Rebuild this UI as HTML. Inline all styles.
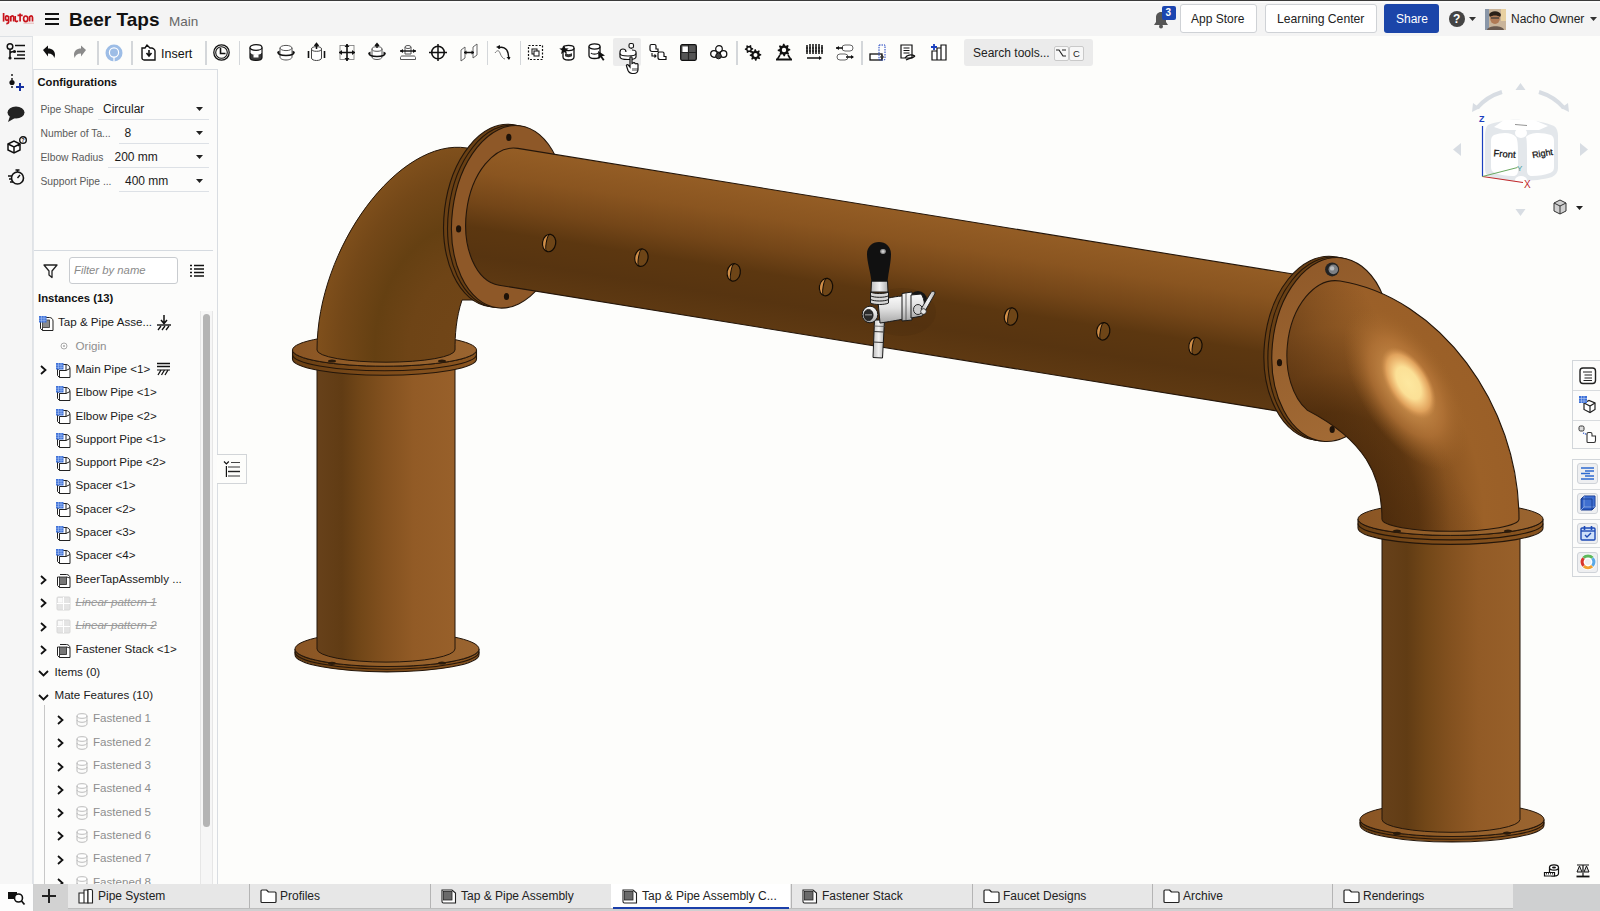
<!DOCTYPE html>
<html><head><meta charset="utf-8"><style>
*{margin:0;padding:0;box-sizing:border-box}
html,body{width:1600px;height:911px;overflow:hidden;background:#fdfdfb;font-family:"Liberation Sans",sans-serif;color:#1a1a1a}
.a{position:absolute}
.t{position:absolute;white-space:nowrap;line-height:1}
svg{position:absolute;overflow:visible}
</style></head>
<body>
<svg style="left:0;top:0" width="1600" height="911" viewBox="0 0 1600 911">
<defs>
<linearGradient id="gMain" gradientUnits="userSpaceOnUse" x1="900" y1="211" x2="878.5" y2="347">
 <stop offset="0" stop-color="#945d25"/>
 <stop offset="0.2" stop-color="#8a5520"/>
 <stop offset="0.42" stop-color="#744618"/>
 <stop offset="0.6" stop-color="#5c3710"/>
 <stop offset="0.8" stop-color="#573410"/>
 <stop offset="1" stop-color="#5e3912"/>
</linearGradient>
<linearGradient id="gSup" x1="0" y1="0" x2="1" y2="0">
 <stop offset="0" stop-color="#67411a"/>
 <stop offset="0.18" stop-color="#613c14"/>
 <stop offset="0.32" stop-color="#724718"/>
 <stop offset="0.5" stop-color="#83511f"/>
 <stop offset="0.7" stop-color="#925b26"/>
 <stop offset="1" stop-color="#98602a"/>
</linearGradient>
<linearGradient id="gFlTop" x1="0" y1="0" x2="1" y2="0">
 <stop offset="0" stop-color="#8a5524"/>
 <stop offset="0.5" stop-color="#94602a"/>
 <stop offset="1" stop-color="#9a6430"/>
</linearGradient>
<linearGradient id="gFlEdge" x1="0" y1="0" x2="1" y2="0">
 <stop offset="0" stop-color="#6a4014"/>
 <stop offset="0.5" stop-color="#7e4c1a"/>
 <stop offset="1" stop-color="#8a5520"/>
</linearGradient>
<radialGradient id="gElL" gradientUnits="userSpaceOnUse" cx="0" cy="0" r="1" gradientTransform="translate(470 352) scale(154 206)">
 <stop offset="0" stop-color="#724618"/>
 <stop offset="0.4" stop-color="#6e4416"/>
 <stop offset="0.62" stop-color="#654012"/>
 <stop offset="0.85" stop-color="#744818"/>
 <stop offset="1" stop-color="#80501c"/>
</radialGradient>
<radialGradient id="gHi" gradientUnits="userSpaceOnUse" cx="0" cy="0" r="1" gradientTransform="translate(1408.5 383) rotate(58) scale(40 21)">
 <stop offset="0" stop-color="#fde8a0"/>
 <stop offset="0.45" stop-color="#fbe096"/>
 <stop offset="0.6" stop-color="#f2c47c"/>
 <stop offset="0.8" stop-color="#e0a25c"/>
 <stop offset="1" stop-color="#c88848" stop-opacity="0"/>
</radialGradient>
<radialGradient id="gElR" gradientUnits="userSpaceOnUse" cx="0" cy="0" r="1" gradientTransform="translate(1335 522) scale(186 243)">
 <stop offset="0" stop-color="#5a3410"/>
 <stop offset="0.25" stop-color="#5a3410"/>
 <stop offset="0.45" stop-color="#633a12"/>
 <stop offset="0.62" stop-color="#8a5420"/>
 <stop offset="0.8" stop-color="#9c6128"/>
 <stop offset="1" stop-color="#9a5f28"/>
</radialGradient>
<radialGradient id="gHi2" gradientUnits="userSpaceOnUse" cx="0" cy="0" r="1" gradientTransform="translate(1406 388) rotate(58) scale(92 46)">
 <stop offset="0" stop-color="#e0a860"/>
 <stop offset="0.6" stop-color="#b8783a" stop-opacity=".7"/>
 <stop offset="1" stop-color="#9c6228" stop-opacity="0"/>
</radialGradient>
<linearGradient id="gFlR" gradientUnits="userSpaceOnUse" x1="1270" y1="260" x2="1380" y2="440">
 <stop offset="0" stop-color="#8e5828"/>
 <stop offset="1" stop-color="#a46c36"/>
</linearGradient>
<linearGradient id="gShadeR" gradientUnits="userSpaceOnUse" x1="1288" y1="380" x2="1385" y2="330">
 <stop offset="0" stop-color="#3e2208" stop-opacity=".55"/>
 <stop offset="0.5" stop-color="#3e2208" stop-opacity=".25"/>
 <stop offset="1" stop-color="#3e2208" stop-opacity="0"/>
</linearGradient>
</defs>
<path d="M295,649 A92,17.5 0 0 0 479,649 L479,654.4 A92,17.5 0 0 1 295,654.4 Z" fill="url(#gFlEdge)" stroke="#24160a" stroke-width="1.1"/>
<path d="M295,651.7 A92,17.5 0 0 0 479,651.7" fill="none" stroke="#24160a" stroke-width="1.1"/>
<ellipse cx="387" cy="649" rx="92" ry="17.5" fill="url(#gFlTop)" stroke="#24160a" stroke-width="1"/>
<path d="M317,360 L317,649 A69,13.1 0 0 0 455,649 L455,360 Z" fill="url(#gSup)"/>
<path d="M317,360 L317,649 M455,360 L455,649" stroke="#24160a" stroke-width="1"/>
<path d="M317,649 A69,13.1 0 0 0 455,649" fill="none" stroke="#24160a" stroke-width="1"/>
<ellipse cx="332" cy="663.35" rx="4" ry="1.6" fill="#2a1a0a"/>
<ellipse cx="442" cy="663.0" rx="4" ry="1.6" fill="#2a1a0a"/>
<path d="M292.5,350 A92,16.2 0 0 0 476.5,350 L476.5,359.0 A92,16.2 0 0 1 292.5,359.0 Z" fill="url(#gFlEdge)" stroke="#24160a" stroke-width="1.1"/>
<path d="M292.5,354.5 A92,16.2 0 0 0 476.5,354.5" fill="none" stroke="#24160a" stroke-width="1.1"/>
<ellipse cx="384.5" cy="350" rx="92" ry="16.2" fill="url(#gFlTop)" stroke="#24160a" stroke-width="1"/>
<ellipse cx="332" cy="361" rx="4" ry="1.6" fill="#2a1a0a"/>
<ellipse cx="442" cy="361" rx="4" ry="1.6" fill="#2a1a0a"/>
<path d="M317,350 C317,247.7 399,137.1 467,148 L505,165 L505,300 L462,300 C456,318 455,335 455,350 A69,12.2 0 0 1 317,350 Z" fill="url(#gElL)" stroke="#24160a" stroke-width="1"/>
<ellipse cx="500.6" cy="215.5" rx="56.3" ry="91.7" transform="rotate(7 500.6 215.5)" fill="#6a4014" stroke="#24160a" stroke-width="1.1"/>
<ellipse cx="504.6" cy="216.2" rx="56.3" ry="91.7" transform="rotate(7 504.6 216.2)" fill="#6a4014" stroke="#24160a" stroke-width="1.1"/>
<ellipse cx="508.5" cy="216.8" rx="56.3" ry="91.7" transform="rotate(7 508.5 216.8)" fill="url(#gFlR)" stroke="#24160a" stroke-width="1.1"/>
<path d="M517.9,148.4 L1310,276.8 L1310,416.3 L499.1,285.2 A42.4,69 7 0 1 466.5,211.6 A42.4,69 7 0 1 517.9,148.4 Z" fill="url(#gMain)"/>
<path d="M1310,276.8 L517.9,148.4 M1310,416.3 L499.1,285.2 A42.4,69 7 0 1 466.5,211.6 A42.4,69 7 0 1 517.9,148.4" fill="none" stroke="#24160a" stroke-width="1.1"/>
<ellipse cx="508.8" cy="137.4" rx="2.6" ry="3.6" fill="#1e1208"/>
<ellipse cx="458.6" cy="228.9" rx="2.6" ry="3.6" fill="#1e1208"/>
<ellipse cx="506.5" cy="296.5" rx="2.6" ry="3.6" fill="#1e1208"/>
<g transform="rotate(10 549.1 243.0)"><ellipse cx="549.1" cy="243.0" rx="6.6" ry="8.8" fill="#6e4517"/><path d="M548.6,234.4 A6.4,8.6 0 0 0 548.6,251.6 A2.4,8.6 0 0 1 548.6,234.4z" fill="#d08e48"/><ellipse cx="549.1" cy="243.0" rx="6.6" ry="8.8" fill="none" stroke="#140c04" stroke-width="1.2"/><path d="M548.6,234.4 A2.4,8.6 0 0 0 548.6,251.6" fill="none" stroke="#140c04" stroke-width="1"/></g>
<g transform="rotate(10 641.4 257.7)"><ellipse cx="641.4" cy="257.7" rx="6.6" ry="8.8" fill="#6e4517"/><path d="M640.9,249.1 A6.4,8.6 0 0 0 640.9,266.3 A2.4,8.6 0 0 1 640.9,249.1z" fill="#d08e48"/><ellipse cx="641.4" cy="257.7" rx="6.6" ry="8.8" fill="none" stroke="#140c04" stroke-width="1.2"/><path d="M640.9,249.1 A2.4,8.6 0 0 0 640.9,266.3" fill="none" stroke="#140c04" stroke-width="1"/></g>
<g transform="rotate(10 733.7 272.4)"><ellipse cx="733.7" cy="272.4" rx="6.6" ry="8.8" fill="#6e4517"/><path d="M733.2,263.79999999999995 A6.4,8.6 0 0 0 733.2,281.0 A2.4,8.6 0 0 1 733.2,263.79999999999995z" fill="#d08e48"/><ellipse cx="733.7" cy="272.4" rx="6.6" ry="8.8" fill="none" stroke="#140c04" stroke-width="1.2"/><path d="M733.2,263.79999999999995 A2.4,8.6 0 0 0 733.2,281.0" fill="none" stroke="#140c04" stroke-width="1"/></g>
<g transform="rotate(10 826.0 287.1)"><ellipse cx="826.0" cy="287.1" rx="6.6" ry="8.8" fill="#6e4517"/><path d="M825.5,278.5 A6.4,8.6 0 0 0 825.5,295.70000000000005 A2.4,8.6 0 0 1 825.5,278.5z" fill="#d08e48"/><ellipse cx="826.0" cy="287.1" rx="6.6" ry="8.8" fill="none" stroke="#140c04" stroke-width="1.2"/><path d="M825.5,278.5 A2.4,8.6 0 0 0 825.5,295.70000000000005" fill="none" stroke="#140c04" stroke-width="1"/></g>
<g transform="rotate(10 1011.0 316.5)"><ellipse cx="1011.0" cy="316.5" rx="6.6" ry="8.8" fill="#6e4517"/><path d="M1010.5,307.9 A6.4,8.6 0 0 0 1010.5,325.1 A2.4,8.6 0 0 1 1010.5,307.9z" fill="#d08e48"/><ellipse cx="1011.0" cy="316.5" rx="6.6" ry="8.8" fill="none" stroke="#140c04" stroke-width="1.2"/><path d="M1010.5,307.9 A2.4,8.6 0 0 0 1010.5,325.1" fill="none" stroke="#140c04" stroke-width="1"/></g>
<g transform="rotate(10 1103.2 331.3)"><ellipse cx="1103.2" cy="331.3" rx="6.6" ry="8.8" fill="#6e4517"/><path d="M1102.7,322.7 A6.4,8.6 0 0 0 1102.7,339.90000000000003 A2.4,8.6 0 0 1 1102.7,322.7z" fill="#d08e48"/><ellipse cx="1103.2" cy="331.3" rx="6.6" ry="8.8" fill="none" stroke="#140c04" stroke-width="1.2"/><path d="M1102.7,322.7 A2.4,8.6 0 0 0 1102.7,339.90000000000003" fill="none" stroke="#140c04" stroke-width="1"/></g>
<g transform="rotate(10 1195.4 346.1)"><ellipse cx="1195.4" cy="346.1" rx="6.6" ry="8.8" fill="#6e4517"/><path d="M1194.9,337.5 A6.4,8.6 0 0 0 1194.9,354.70000000000005 A2.4,8.6 0 0 1 1194.9,337.5z" fill="#d08e48"/><ellipse cx="1195.4" cy="346.1" rx="6.6" ry="8.8" fill="none" stroke="#140c04" stroke-width="1.2"/><path d="M1194.9,337.5 A2.4,8.6 0 0 0 1194.9,354.70000000000005" fill="none" stroke="#140c04" stroke-width="1"/></g>
<ellipse cx="1323.8" cy="348.2" rx="59.5" ry="92.2" transform="rotate(5.5 1323.8 348.2)" fill="#6a4014" stroke="#24160a" stroke-width="1.1"/>
<ellipse cx="1327.8" cy="348.9" rx="59.5" ry="92.2" transform="rotate(5.5 1327.8 348.9)" fill="#6a4014" stroke="#24160a" stroke-width="1.1"/>
<ellipse cx="1331.7" cy="349.5" rx="59.5" ry="92.2" transform="rotate(5.5 1331.7 349.5)" fill="url(#gFlR)" stroke="#24160a" stroke-width="1.1"/>
<path d="M1360,819.5 A92,17 0 0 0 1544,819.5 L1544,824.9 A92,17 0 0 1 1360,824.9 Z" fill="url(#gFlEdge)" stroke="#24160a" stroke-width="1.1"/>
<path d="M1360,822.2 A92,17 0 0 0 1544,822.2" fill="none" stroke="#24160a" stroke-width="1.1"/>
<ellipse cx="1452" cy="819.5" rx="92" ry="17" fill="url(#gFlTop)" stroke="#24160a" stroke-width="1"/>
<path d="M1382,530 L1382,819.5 A69,12.8 0 0 0 1520,819.5 L1520,530 Z" fill="url(#gSup)"/>
<path d="M1382,530 L1382,819.5 M1520,530 L1520,819.5" stroke="#24160a" stroke-width="1"/>
<path d="M1382,819.5 A69,12.8 0 0 0 1520,819.5" fill="none" stroke="#24160a" stroke-width="1"/>
<ellipse cx="1397" cy="833.44" rx="4" ry="1.6" fill="#2a1a0a"/>
<ellipse cx="1507" cy="833.1" rx="4" ry="1.6" fill="#2a1a0a"/>
<path d="M1358.0,519 A92.5,16.4 0 0 0 1543.0,519 L1543.0,528.0 A92.5,16.4 0 0 1 1358.0,528.0 Z" fill="url(#gFlEdge)" stroke="#24160a" stroke-width="1.1"/>
<path d="M1358.0,523.5 A92.5,16.4 0 0 0 1543.0,523.5" fill="none" stroke="#24160a" stroke-width="1.1"/>
<ellipse cx="1450.5" cy="519" rx="92.5" ry="16.4" fill="url(#gFlTop)" stroke="#24160a" stroke-width="1"/>
<ellipse cx="1397" cy="531" rx="4" ry="1.6" fill="#2a1a0a"/>
<ellipse cx="1508" cy="531" rx="4" ry="1.6" fill="#2a1a0a"/>
<path d="M1340.1,281.0 C1438.8,296.8 1519,404 1519,519 A68.5,12.3 0 0 1 1382,519 C1382,475 1365,440 1307.0,409.9 A44.5,69 5.5 0 1 1287.4,345.2 A44.5,69 5.5 0 1 1340.1,281.0 Z" fill="url(#gElR)" stroke="#24160a" stroke-width="1.1"/>
<path d="M1340.1,281.0 C1438.8,296.8 1519,404 1519,519 A68.5,12.3 0 0 1 1382,519 C1382,475 1365,440 1307.0,409.9 A44.5,69 5.5 0 1 1287.4,345.2 A44.5,69 5.5 0 1 1340.1,281.0 Z" fill="url(#gShadeR)"/>
<path d="M1340.1,281.0 C1438.8,296.8 1519,404 1519,519 A68.5,12.3 0 0 1 1382,519 C1382,475 1365,440 1307.0,409.9 A44.5,69 5.5 0 1 1287.4,345.2 A44.5,69 5.5 0 1 1340.1,281.0 Z" fill="url(#gHi2)"/>
<path d="M1340.1,281.0 C1438.8,296.8 1519,404 1519,519 A68.5,12.3 0 0 1 1382,519 C1382,475 1365,440 1307.0,409.9 A44.5,69 5.5 0 1 1287.4,345.2 A44.5,69 5.5 0 1 1340.1,281.0 Z" fill="url(#gHi)"/>
<circle cx="1332.1" cy="269.4" r="7" fill="#222"/><circle cx="1333.3" cy="269.4" r="4.8" fill="#7d8084"/><circle cx="1332.1" cy="268.4" r="2.2" fill="#b8bbbe"/>
<ellipse cx="1279.5" cy="362.7" rx="2.6" ry="3.6" fill="#1e1208"/>
<ellipse cx="1332.2" cy="429.5" rx="2.6" ry="3.6" fill="#1e1208"/>
<g>
<defs>
<linearGradient id="gSil" x1="0" y1="0" x2="0" y2="1"><stop offset="0" stop-color="#fafafa"/><stop offset=".45" stop-color="#e2e2e2"/><stop offset="1" stop-color="#a8a8a8"/></linearGradient>
<linearGradient id="gSilH" x1="0" y1="0" x2="1" y2="0"><stop offset="0" stop-color="#bdbdbd"/><stop offset=".5" stop-color="#f2f2f2"/><stop offset="1" stop-color="#b0b0b0"/></linearGradient>
</defs>
<ellipse cx="902" cy="312" rx="34" ry="24" fill="#2e1a08" opacity=".1"/>
<path d="M874.5 320 L873 357.5 L882.5 358 L884.5 320 Z" fill="url(#gSilH)" stroke="#1a1a1a" stroke-width="1"/>
<path d="M873.6 331.5 L883.6 332 M873.2 342 L883 342.5" stroke="#333" stroke-width="1"/>
<path d="M874 326 L884.5 326.5" stroke="#555" stroke-width=".8"/>
<circle cx="918" cy="300" r="9" fill="#151515"/>
<path d="M878 301 C886 298 898 296 904 296 L904 319 C898 320 888 322 880 323 Z" fill="url(#gSil)" stroke="#1a1a1a" stroke-width="1"/>
<path d="M902 293.5 L912 292 L912 320 L902 321 Z" fill="url(#gSil)" stroke="#1a1a1a" stroke-width="1"/>
<path d="M906 293 L906 320.5" stroke="#444" stroke-width=".8"/>
<path d="M911 295 L921 294 C925 298 926 312 922 316 L911 318 Z" fill="url(#gSil)" stroke="#1a1a1a" stroke-width="1"/>
<ellipse cx="918" cy="309.5" rx="4.5" ry="5" fill="#cfcfcf" stroke="#1a1a1a" stroke-width=".9"/>
<path d="M921 309 L931 292.5 C932.5 290 936 291.5 934.8 294 L925 311 Z" fill="url(#gSilH)" stroke="#1a1a1a" stroke-width=".9"/>
<circle cx="923.5" cy="311.5" r="2.8" fill="#e8e8e8" stroke="#1a1a1a" stroke-width=".8"/>
<ellipse cx="870" cy="314.5" rx="7.8" ry="8.3" fill="url(#gSil)" stroke="#1a1a1a" stroke-width="1"/>
<ellipse cx="868.5" cy="315" rx="4.6" ry="5.6" fill="#2a2a2a" stroke="#111" stroke-width=".8"/>
<path d="M865 314.8 L872 314.8" stroke="#8a8a8a" stroke-width="1.3"/>
<path d="M871.5 281 L887.5 281 L888 292 L871 292 Z" fill="url(#gSilH)" stroke="#1a1a1a" stroke-width="1"/>
<path d="M870.5 292 C874 294 885 294 888.5 292 L888.5 303 C885 305 874 305 870.5 303 Z" fill="#d6d6d6" stroke="#1a1a1a" stroke-width="1"/>
<path d="M870.5 295.8 C874 297.8 885 297.8 888.5 295.8 M870.5 299.5 C874 301.5 885 301.5 888.5 299.5" stroke="#1a1a1a" stroke-width="1" fill="none"/>
<path d="M871.5 281.5 C870.5 272 867 262 867 254 C867 246.5 872.5 242 879 242 C885.5 242 891 246.5 891 254 C891 262 888.5 272 887.5 281.5 Z" fill="#111"/>
<ellipse cx="883" cy="251.5" rx="2.8" ry="2.4" fill="#9a9a9a"/>
<ellipse cx="883" cy="251.5" rx="1.4" ry="1.2" fill="#cfcfcf"/>
</g>
</svg>
<div class="a" style="left:0;top:0;width:1600px;height:1px;background:#3a3a3a"></div>
<div class="a" style="left:0;top:1px;width:1600px;height:35px;background:#f4f4f4"></div>
<div class="a" style="left:0;top:1px;width:1600px;height:2px;background:#fbfbfb"></div>
<svg style="left:0;top:0" width="1" height="1"><g fill="none" stroke="#c8121a" stroke-width="1.7" stroke-linecap="butt"><path d="M3.6 13v8.6"/><path d="M8.6 16v6c0 1.2-.8 1.6-2.3 1.6M8.6 17.2c-.3-.9-1-1.3-1.7-1.3-1 0-1.4.9-1.4 2.2s.4 2.3 1.4 2.3c.7 0 1.4-.4 1.7-1.3"/><path d="M10.8 21.6v-5.6M10.8 17.2c.4-.9 1-1.3 1.6-1.3.9 0 1.3.6 1.3 1.7v4"/><path d="M15.2 16v3.8c0 1 .4 1.8 1.3 1.8.6 0 1-.4 1.2-1"/><path d="M17.5 15.3h5.2M20.1 13.6v8"/><path d="M25.7 16c1.3 0 2.1 1 2.1 2.8s-.8 2.8-2.1 2.8-2.1-1-2.1-2.8.8-2.8 2.1-2.8z"/><path d="M29.6 21.6v-5.6M29.6 17.2c.4-.9 1-1.3 1.6-1.3.9 0 1.3.6 1.3 1.7v4"/></g><path d="M23.5 23.2h10.5" stroke="#e08a8a" stroke-width=".6"/></svg>
<div class="a" style="left:45px;top:13px;width:14px;height:2.4px;background:#111"></div>
<div class="a" style="left:45px;top:18px;width:14px;height:2.4px;background:#111"></div>
<div class="a" style="left:45px;top:23px;width:14px;height:2.4px;background:#111"></div>
<div class="t" style="left:69px;top:10px;font-size:19px;font-weight:bold;color:#111">Beer Taps</div>
<div class="t" style="left:169px;top:14.5px;font-size:13.5px;color:#666">Main</div>
<svg style="left:1152px;top:10px" width="18" height="20" viewBox="0 0 18 20"><path d="M9 2c-3 0-5 2.3-5 5.5v4.5l-2 3h14l-2-3V7.5C14 4.3 12 2 9 2z" fill="#555"/><circle cx="9" cy="16.5" r="2" fill="#555"/></svg>
<div class="a" style="left:1162px;top:6px;width:14px;height:14px;background:#1c45b0;border-radius:2px"></div>
<div class="t" style="left:1165.5px;top:7.5px;font-size:10px;font-weight:bold;color:#fff">3</div>
<div class="a" style="left:1180px;top:4px;width:77px;height:29px;background:#fff;border:1px solid #cfd2d6;border-radius:3px"></div>
<div class="t" style="left:1191px;top:13px;font-size:12px;color:#222">App Store</div>
<div class="a" style="left:1265px;top:4px;width:112px;height:29px;background:#fff;border:1px solid #cfd2d6;border-radius:3px"></div>
<div class="t" style="left:1277px;top:13px;font-size:12.2px;color:#222">Learning Center</div>
<div class="a" style="left:1384px;top:4px;width:55px;height:29px;background:#1b45a9;border-radius:3px"></div>
<div class="t" style="left:1396px;top:13px;font-size:12px;color:#fff">Share</div>
<div class="a" style="left:1449px;top:11px;width:16px;height:16px;background:#444;border-radius:50%"></div>
<div class="t" style="left:1453px;top:12.5px;font-size:12px;font-weight:bold;color:#fff">?</div>
<svg style="left:1469px;top:17px" width="7" height="4"><path d="M0 0h7L3.5 4z" fill="#333"/></svg>
<svg style="left:1485px;top:9px" width="21" height="21" viewBox="0 0 21 21"><rect width="21" height="21" fill="#c9b49a"/><rect x="0" y="0" width="4" height="21" fill="#8a97a8"/><rect x="16" y="0" width="5" height="12" fill="#e8d0a0"/><ellipse cx="10" cy="9" rx="5" ry="6" fill="#b07a55"/><path d="M4 6c1-5 11-5 12 0l-1 2c-2-2-8-2-10 0z" fill="#2a2018"/><rect x="6" y="8" width="8" height="2" fill="#333" opacity=".6"/><path d="M2 21c1-5 16-5 17 0z" fill="#6a5a50"/></svg>
<div class="t" style="left:1511px;top:13px;font-size:12px;color:#222">Nacho Owner</div>
<svg style="left:1590px;top:17px" width="7" height="4"><path d="M0 0h7L3.5 4z" fill="#333"/></svg>
<div class="a" style="left:0;top:36px;width:33px;height:875px;background:#f6f6f6;border-right:1px solid #e0e3e6;border-top:1px solid #dde1e5"></div>
<svg style="left:6px;top:43px" width="20" height="17" viewBox="0 0 20 17"><circle cx="4" cy="3.5" r="2.8" fill="none" stroke="#111" stroke-width="1.5"/><path d="M4 6.3v8.5M4 11c0-2 2-2.5 4-2.5" fill="none" stroke="#111" stroke-width="1.5"/><circle cx="4" cy="15" r="1.6" fill="#111"/><circle cx="8.5" cy="8.5" r="1.6" fill="#111"/><path d="M9 2.5h10M11 8.5h8M11 12h8M8 15.5h11" stroke="#111" stroke-width="1.6"/></svg>
<svg style="left:9px;top:74px" width="17" height="18" viewBox="0 0 17 18"><path d="M3 0v16" stroke="#111" stroke-width="1.4" stroke-dasharray="2 2"/><circle cx="3" cy="8.5" r="2.6" fill="#111"/><path d="M7 13h8M11 9v8" stroke="#1530a0" stroke-width="2"/></svg>
<svg style="left:7px;top:106px" width="18" height="17" viewBox="0 0 18 17"><ellipse cx="9" cy="6.5" rx="8.5" ry="6" fill="#222"/><path d="M3 10l-2 6 7-4z" fill="#222"/></svg>
<svg style="left:6px;top:136px" width="21" height="18" viewBox="0 0 21 18"><path d="M2 8l6-3 6 3v6l-6 3-6-3z" fill="#fff" stroke="#111" stroke-width="1.5"/><path d="M2 8l6 3 6-3M8 11v6" fill="none" stroke="#111" stroke-width="1.5"/><circle cx="17" cy="4" r="3.3" fill="#fff" stroke="#111" stroke-width="1.4"/><path d="M14 8l-2 2" stroke="#111" stroke-width="1.4"/><text x="15.3" y="6" font-size="5.5" font-weight="bold" font-family="Liberation Sans" fill="#111">?</text></svg>
<svg style="left:7px;top:168px" width="18" height="17" viewBox="0 0 18 17"><circle cx="10.5" cy="10" r="6" fill="none" stroke="#111" stroke-width="1.6"/><path d="M8.5 2h4M10.5 2v2M10.5 10l2.5-3M1 8h4M2 11h3M3 14h3" stroke="#111" stroke-width="1.4"/></svg>
<div class="a" style="left:0;top:884px;width:33px;height:27px;background:#fdfdfd"></div>
<svg style="left:8px;top:891px" width="17" height="14" viewBox="0 0 17 14"><path d="M0 1h9v7H0z" fill="#111"/><circle cx="10.5" cy="7" r="4" fill="#fff" stroke="#111" stroke-width="1.6"/><path d="M13.5 10l3 3.5" stroke="#111" stroke-width="1.8"/></svg>
<svg style="left:42px;top:45px" width="14" height="13" viewBox="0 0 14 13"><path d="M1 5l5-4.5v3c4.5 0 7 2.5 7 6.5 0 1-0.3 2-0.8 3-0.5-3-2.5-4.5-6.2-4.5v3z" fill="#111"/></svg>
<svg style="left:73px;top:45px" width="14" height="13" viewBox="0 0 14 13"><path d="M13 5L8 .5v3C3.5 3.5 1 6 1 10c0 1 .3 2 .8 3 .5-3 2.5-4.5 6.2-4.5v3z" fill="#8b8b8b"/></svg>
<div class="a" style="left:97px;top:41px;width:1.5px;height:24px;background:#d4d7da"></div>
<svg style="left:105px;top:44px" width="18" height="18" viewBox="0 0 18 18"><circle cx="9" cy="9" r="8.5" fill="#9dbde6"/><circle cx="9" cy="8.5" r="4.6" fill="none" stroke="#fff" stroke-width="1.2"/><path d="M9 13v5" stroke="#fff" stroke-width="1.2"/></svg>
<div class="a" style="left:131px;top:41px;width:1.5px;height:24px;background:#d4d7da"></div>
<svg style="left:141px;top:44px" width="15" height="17" viewBox="0 0 15 17"><path d="M1 4h3l2-3 3 3h1.5c1.5 0 3.5 1.5 3.5 3v9H3c-1 0-2-1-2-2z" fill="#fff" stroke="#111" stroke-width="1.4"/><path d="M8 6v5M5.5 9l2.5 3 2.5-3" stroke="#111" stroke-width="1.6" fill="none"/></svg>
<div class="t" style="left:161px;top:48px;font-size:12.5px;color:#111">Insert</div>
<div class="a" style="left:205px;top:41px;width:1.5px;height:24px;background:#d4d7da"></div>
<svg style="left:213px;top:44px" width="17" height="17" viewBox="0 0 17 17"><circle cx="8.5" cy="8.5" r="7.7" fill="none" stroke="#111" stroke-width="1.3"/><circle cx="8.5" cy="8.5" r="5.8" fill="none" stroke="#111" stroke-width="1.1"/><path d="M7.5 4v5.5h5" fill="none" stroke="#111" stroke-width="1.6"/></svg>
<div class="a" style="left:238.5px;top:41px;width:1.5px;height:24px;background:#d4d7da"></div>
<svg style="left:249px;top:44px" width="14" height="17" viewBox="0 0 14 17"><path d="M1 3.5v10c0 1.7 2.7 3 6 3s6-1.3 6-3v-10" fill="#3a3a3a" stroke="#111" stroke-width="1.2"/><path d="M1.6 3.5v5c0 1.5 2.5 2.5 5.4 2.5s5.4-1 5.4-2.5v-5z" fill="#fff"/><path d="M4.5 10.5v3h5v-3" fill="#fff"/><ellipse cx="7" cy="3.5" rx="6" ry="2.8" fill="#fff" stroke="#111" stroke-width="1.2"/></svg>
<svg style="left:277px;top:44px" width="18" height="17" viewBox="0 0 18 17"><path d="M3 4v9c0 1.7 2.7 3 6 3s6-1.3 6-3V4" fill="#fff" stroke="#555" stroke-width="1"/><ellipse cx="9" cy="4" rx="6" ry="2.6" fill="#fff" stroke="#555" stroke-width="1"/><path d="M1 8c0 2 3 3.5 8 3.5s8-1.5 8-3.5" fill="none" stroke="#111" stroke-width="1.6"/><path d="M0 8l2.5-1.5v3zM18 8l-2.5-1.5v3z" fill="#111"/></svg>
<svg style="left:307px;top:43px" width="19" height="18" viewBox="0 0 19 18"><path d="M4.5 6v9c0 1.5 2.2 2.5 5 2.5s5-1 5-2.5V6" fill="#fff" stroke="#444" stroke-width="1"/><ellipse cx="9.5" cy="6" rx="5" ry="2.3" fill="#fff" stroke="#444" stroke-width="1"/><path d="M9.5 6V1M7.5 3l2-2.5 2 2.5" stroke="#111" stroke-width="1.5" fill="none"/><path d="M1.5 8v7M17.5 8v7" stroke="#111" stroke-width="1.6"/></svg>
<svg style="left:339px;top:44px" width="16" height="17" viewBox="0 0 16 17"><rect x="1" y="1.5" width="14" height="14" fill="none" stroke="#777" stroke-width=".8"/><path d="M8 0v17M0 8.5h16" stroke="#111" stroke-width="1.6"/><path d="M8 0l-2.5 3h5zM8 17l-2.5-3h5zM0 8.5l3-2.5v5zM16 8.5l-3-2.5v5z" fill="#111"/></svg>
<svg style="left:368px;top:43px" width="18" height="18" viewBox="0 0 18 18"><path d="M4 6v8c0 1.5 2.2 2.5 5 2.5s5-1 5-2.5V6" fill="#fff" stroke="#555" stroke-width="1"/><ellipse cx="9" cy="6" rx="5" ry="2.3" fill="#fff" stroke="#555" stroke-width="1"/><path d="M9 5V1M7 3l2-2.5 2 2.5" stroke="#111" stroke-width="1.4" fill="none"/><path d="M1 10c0 2 3 3.5 8 3.5s8-1.5 8-3.5" fill="none" stroke="#111" stroke-width="1.6"/><path d="M0 10l2.5-1.5v3zM18 10l-2.5-1.5v3z" fill="#111"/></svg>
<svg style="left:400px;top:44px" width="16" height="17" viewBox="0 0 16 17"><path d="M5 3v7h6V3" fill="#fff" stroke="#555" stroke-width="1"/><ellipse cx="8" cy="3" rx="3" ry="1.5" fill="#fff" stroke="#555" stroke-width="1"/><path d="M2 12h12c1 0 1.5 1 1.5 1.5v2h-15v-2c0-.5.5-1.5 1.5-1.5z" fill="#fff" stroke="#555" stroke-width="1"/><path d="M0 7h16" stroke="#111" stroke-width="1.4"/><path d="M0 7l3-2v4zM16 7l-3-2v4z" fill="#111"/></svg>
<svg style="left:429px;top:44px" width="18" height="17" viewBox="0 0 18 17"><circle cx="9" cy="8.5" r="6.3" fill="none" stroke="#111" stroke-width="1.6"/><path d="M9 0v17M0 8.5h18" stroke="#111" stroke-width="1.5"/></svg>
<svg style="left:460px;top:44px" width="18" height="17" viewBox="0 0 18 17"><path d="M1 6l4-3v11l-4 3z M13 3l4-3v11l-4 3z" fill="#fff" stroke="#555" stroke-width=".9"/><path d="M4 8.5h10" stroke="#111" stroke-width="1.5"/><path d="M4 8.5l2.5-2v4zM14 8.5l-2.5-2v4z" fill="#111"/></svg>
<div class="a" style="left:486.5px;top:41px;width:1.5px;height:24px;background:#d4d7da"></div>
<svg style="left:494px;top:44px" width="17" height="17" viewBox="0 0 17 17"><path d="M4 4c4-2 9 0 10 5l1 6" fill="none" stroke="#111" stroke-width="1.4"/><path d="M1 9c2-3 4-3 5 0s3 6 5 6" fill="none" stroke="#777" stroke-width="1"/><path d="M2 3l4-2v4zM15 16l-2.5-3h4z" fill="#111"/></svg>
<div class="a" style="left:519.5px;top:41px;width:1.5px;height:24px;background:#d4d7da"></div>
<svg style="left:527px;top:44px" width="17" height="17" viewBox="0 0 17 17"><rect x="1.5" y="1.5" width="14" height="14" fill="none" stroke="#111" stroke-width="1.2" stroke-dasharray="2 1.5"/><rect x="5" y="5" width="5" height="5" fill="#fff" stroke="#111" stroke-width="1"/><rect x="7" y="7" width="5" height="5" fill="#fff" stroke="#111" stroke-width="1"/></svg>
<svg style="left:559px;top:44px" width="17" height="17" viewBox="0 0 17 17"><path d="M4 4v9c0 1.7 2.3 3 5.5 3s5.5-1.3 5.5-3V4" fill="#fff" stroke="#111" stroke-width="1.3"/><ellipse cx="9.5" cy="4" rx="5.5" ry="2.6" fill="#fff" stroke="#111" stroke-width="1.3"/><path d="M6 9c1 1.5 6 1.5 7 0v3c-1 1.5-6 1.5-7 0z" fill="#333"/><path d="M5 1l1.3 3.2 3.4.2-2.6 2.2.9 3.3L5 8l-3 1.9.9-3.3L.3 4.4l3.4-.2z" fill="#111"/></svg>
<svg style="left:588px;top:43px" width="19" height="18" viewBox="0 0 19 18"><path d="M1 3.5v9c0 1.7 2.3 3 5.5 3s5.5-1.3 5.5-3v-9" fill="#fff" stroke="#111" stroke-width="1.3"/><ellipse cx="6.5" cy="3.5" rx="5.5" ry="2.6" fill="#fff" stroke="#111" stroke-width="1.3"/><path d="M3 10c1 1.5 6 1.5 7 0" fill="none" stroke="#111" stroke-width="1.2"/><path d="M10 8l7 4.5-3 .8 2.5 3.5-1.5 1-2.4-3.5-2 2z" fill="#111"/></svg>
<div class="a" style="left:613px;top:38px;width:28px;height:28px;background:#ececec;border-radius:2px"></div>
<svg style="left:619px;top:43px" width="18" height="18" viewBox="0 0 18 18"><rect x="10" y="0.5" width="4.5" height="4.5" rx="1.5" fill="#fff" stroke="#111" stroke-width="1.1"/><path d="M12.2 5v4" stroke="#111" stroke-width="1" stroke-dasharray="1 1"/><path d="M1 9c0-2 1.5-3 3-3s3 1 3 3M1 9v5c0 1.5 4 2.5 8 2.5s8-1 8-2.5V9c0-1-2-2-4-2" fill="#fff" stroke="#111" stroke-width="1.2"/><path d="M1 10.5c0 1.5 4 2.5 8 2.5s8-1 8-2.5" fill="none" stroke="#111" stroke-width="1.1"/></svg>
<svg style="left:626px;top:56px" width="14" height="18" viewBox="0 0 14 18"><path d="M4 1.5c0-1 2-1 2 0v6l1-.5c.5-.5 2-.5 2 .5l1 .3c.5-.3 2-.3 2 .7v5c0 2-1.5 4-4 4H6c-2 0-3-1-4-3L.5 10c-.5-1 .8-2 1.8-1l1.7 2z" fill="#fff" stroke="#111" stroke-width="1.2"/><path d="M7 12v3M9 12v3M11 12v3" stroke="#111" stroke-width=".8"/></svg>
<svg style="left:649px;top:44px" width="18" height="17" viewBox="0 0 18 17"><path d="M1 2c0-1 .8-1.5 1.5-1.5h3c1 0 1.5.5 1.5 1.5v3h2v2.5H3c-1.2 0-2-.8-2-2z" fill="#fff" stroke="#111" stroke-width="1.2"/><path d="M9 9.5c0-1 .8-1.5 1.5-1.5h3c1 0 1.5.5 1.5 1.5v3h2v3h-6c-1.2 0-2-.8-2-2z" fill="#fff" stroke="#111" stroke-width="1.2"/><path d="M3 9v3h4M5.5 10.5l1.5 1.5-1.5 1.5" fill="none" stroke="#111" stroke-width="1.1"/></svg>
<svg style="left:680px;top:44px" width="17" height="17" viewBox="0 0 17 17"><rect x=".7" y=".7" width="15.6" height="15.6" rx="1.5" fill="#555" stroke="#111" stroke-width="1.3"/><rect x="2.5" y="2.5" width="5.5" height="5.5" fill="#fff"/><path d="M8.5 1v15M1 8.5h15" stroke="#222" stroke-width="1.2"/></svg>
<svg style="left:710px;top:45px" width="18" height="15" viewBox="0 0 18 15"><circle cx="9" cy="4" r="3.3" fill="#fff" stroke="#111" stroke-width="1.2"/><circle cx="4" cy="9" r="3.3" fill="#fff" stroke="#111" stroke-width="1.3"/><circle cx="13.5" cy="9" r="3.3" fill="#fff" stroke="#111" stroke-width="1.3"/><circle cx="8.5" cy="11" r="2.8" fill="#444" stroke="#111" stroke-width="1"/></svg>
<div class="a" style="left:736px;top:41px;width:1.5px;height:24px;background:#d4d7da"></div>
<svg style="left:744px;top:44px" width="18" height="17" viewBox="0 0 18 17"><path d="M9.12,4.18 L9.19,5.27 L7.84,5.96 L7.49,6.67 L7.77,8.16 L6.86,8.77 L5.59,7.94 L4.80,7.99 L3.65,8.98 L2.67,8.49 L2.74,6.98 L2.31,6.33 L0.88,5.82 L0.81,4.73 L2.16,4.04 L2.51,3.33 L2.23,1.84 L3.14,1.23 L4.41,2.06 L5.20,2.01 L6.35,1.02 L7.33,1.51 L7.26,3.02 L7.69,3.67Z M6.5,5 A1.5,1.5 0 1 0 3.5,5 A1.5,1.5 0 1 0 6.5,5Z" fill="#111" fill-rule="evenodd"/><path d="M17.24,10.15 L17.29,11.28 L15.57,12.02 L15.30,12.80 L16.16,14.46 L15.40,15.30 L13.66,14.60 L12.91,14.95 L12.35,16.74 L11.22,16.79 L10.48,15.07 L9.70,14.80 L8.04,15.66 L7.20,14.90 L7.90,13.16 L7.55,12.41 L5.76,11.85 L5.71,10.72 L7.43,9.98 L7.70,9.20 L6.84,7.54 L7.60,6.70 L9.34,7.40 L10.09,7.05 L10.65,5.26 L11.78,5.21 L12.52,6.93 L13.30,7.20 L14.96,6.34 L15.80,7.10 L15.10,8.84 L15.45,9.59Z M13.5,11 A2.0,2.0 0 1 0 9.5,11 A2.0,2.0 0 1 0 13.5,11Z" fill="#111" fill-rule="evenodd"/></svg>
<svg style="left:775px;top:43px" width="18" height="18" viewBox="0 0 18 18"><path d="M15.23,6.08 L15.29,7.31 L13.46,8.12 L13.16,8.97 L14.06,10.75 L13.23,11.67 L11.36,10.95 L10.55,11.33 L9.92,13.23 L8.69,13.29 L7.88,11.46 L7.03,11.16 L5.25,12.06 L4.33,11.23 L5.05,9.36 L4.67,8.55 L2.77,7.92 L2.71,6.69 L4.54,5.88 L4.84,5.03 L3.94,3.25 L4.77,2.33 L6.64,3.05 L7.45,2.67 L8.08,0.77 L9.31,0.71 L10.12,2.54 L10.97,2.84 L12.75,1.94 L13.67,2.77 L12.95,4.64 L13.33,5.45Z M11.2,7 A2.2,2.2 0 1 0 6.8,7 A2.2,2.2 0 1 0 11.2,7Z" fill="#111" fill-rule="evenodd"/><path d="M1 16.5h16" stroke="#111" stroke-width="2"/><path d="M5 12l-2.5 4M13 12l2.5 4" stroke="#111" stroke-width="1.6"/></svg>
<svg style="left:805px;top:43px" width="18" height="18" viewBox="0 0 18 18"><path d="M2 2v9M5 1v10M8 1v10M11 1v10M14 1v10M17 2v9" stroke="#111" stroke-width="1.5"/><path d="M1 5h17M1 8h17" stroke="#111" stroke-width="1" stroke-dasharray="2 1"/><path d="M2 15h13" stroke="#111" stroke-width="1.5"/><path d="M17 15l-3-2v4z" fill="#111"/></svg>
<svg style="left:836px;top:44px" width="18" height="17" viewBox="0 0 18 17"><rect x="6" y="1" width="11" height="6" rx="3" fill="#fff" stroke="#666" stroke-width="1"/><rect x="1" y="10" width="11" height="6" rx="3" fill="#fff" stroke="#666" stroke-width="1"/><path d="M0 4h7M10 13h7" stroke="#111" stroke-width="1.5"/><path d="M0 4l3-2v4zM18 13l-3-2v4z" fill="#111"/></svg>
<div class="a" style="left:861px;top:41px;width:1.5px;height:24px;background:#d4d7da"></div>
<svg style="left:869px;top:44px" width="18" height="17" viewBox="0 0 18 17"><rect x="1" y="10" width="12" height="6" fill="#fff" stroke="#111" stroke-width="1.3"/><path d="M10 1h6v14c0 .5-.5 1-1 1h-4c-.5 0-1-.5-1-1z" fill="none" stroke="#1a3fbf" stroke-width="1" stroke-dasharray="1.5 1"/><circle cx="13" cy="13" r="1.3" fill="none" stroke="#111" stroke-width=".8"/></svg>
<svg style="left:900px;top:44px" width="18" height="17" viewBox="0 0 18 17"><path d="M1 1h11v13H1z" fill="#fff" stroke="#111" stroke-width="1.2"/><path d="M3.5 4h6M3.5 6.5h6M3.5 9h6" stroke="#111" stroke-width="1"/><path d="M5 14c2-3 6-4 10-2M6 16c3-2 7-2 9-4" fill="none" stroke="#111" stroke-width="1.3"/></svg>
<svg style="left:930px;top:43px" width="18" height="18" viewBox="0 0 18 18"><path d="M2 8h5v9H2z M7 5h4v12H7z M11 2h5v15h-5z" fill="#fff" stroke="#111" stroke-width="1.2"/><path d="M4 1v6M1 4h6" stroke="#1a3fbf" stroke-width="1.8"/></svg>
<div class="a" style="left:964px;top:39px;width:129px;height:27px;background:#ebebeb;border-radius:3px"></div>
<div class="t" style="left:973px;top:47px;font-size:12px;color:#222">Search tools...</div>
<div class="a" style="left:1053.5px;top:45.5px;width:15px;height:15px;background:#f7f7f7;border:1px solid #c9c9c9;border-radius:2px"></div>
<div class="a" style="left:1069px;top:45.5px;width:14.5px;height:15px;background:#f7f7f7;border:1px solid #c9c9c9;border-radius:2px"></div>
<svg style="left:1056px;top:49px" width="10" height="8"><path d="M0 1h3l4 6h3M6 1h4" fill="none" stroke="#222" stroke-width="1.2"/></svg>
<div class="t" style="left:1073px;top:48.5px;font-size:9.5px;color:#222">C</div>
<div class="a" style="left:33px;top:69px;width:185px;height:815px;background:#fcfcfb;border-left:1px solid #e3e6ea;border-top:1px solid #d9dde2;border-right:1px solid #d9dde2"></div>
<div class="t" style="left:37.5px;top:77px;font-size:11.2px;font-weight:bold;color:#111">Configurations</div>
<div class="t" style="left:40.5px;top:105px;font-size:10.3px;color:#5a5a5a">Pipe Shape</div>
<div class="t" style="left:103px;top:102.5px;font-size:12px;color:#1a1a1a">Circular</div>
<svg style="left:196px;top:106.5px" width="7" height="4"><path d="M0 0h7L3.5 4z" fill="#222"/></svg>
<div class="a" style="left:98px;top:119px;width:110.5px;height:1px;background:#dde1e6"></div>
<div class="t" style="left:40.5px;top:129px;font-size:10.3px;color:#5a5a5a">Number of Ta...</div>
<div class="t" style="left:124.5px;top:126.5px;font-size:12px;color:#1a1a1a">8</div>
<svg style="left:196px;top:130.5px" width="7" height="4"><path d="M0 0h7L3.5 4z" fill="#222"/></svg>
<div class="a" style="left:119px;top:143px;width:89.5px;height:1px;background:#dde1e6"></div>
<div class="t" style="left:40.5px;top:153px;font-size:10.3px;color:#5a5a5a">Elbow Radius</div>
<div class="t" style="left:114.5px;top:150.5px;font-size:12px;color:#1a1a1a">200 mm</div>
<svg style="left:196px;top:154.5px" width="7" height="4"><path d="M0 0h7L3.5 4z" fill="#222"/></svg>
<div class="a" style="left:108px;top:167px;width:100.5px;height:1px;background:#dde1e6"></div>
<div class="t" style="left:40.5px;top:177px;font-size:10.3px;color:#5a5a5a">Support Pipe ...</div>
<div class="t" style="left:125px;top:174.5px;font-size:12px;color:#1a1a1a">400 mm</div>
<svg style="left:196px;top:178.5px" width="7" height="4"><path d="M0 0h7L3.5 4z" fill="#222"/></svg>
<div class="a" style="left:119px;top:191px;width:89.5px;height:1px;background:#dde1e6"></div>
<div class="a" style="left:34px;top:250px;width:179px;height:1px;background:#d5dae0"></div>
<svg style="left:43px;top:264px" width="15" height="14" viewBox="0 0 15 14"><path d="M1 1h13L9 7v6.5L6 11V7z" fill="none" stroke="#222" stroke-width="1.3" stroke-linejoin="round"/></svg>
<div class="a" style="left:69px;top:257px;width:109px;height:27px;background:#fff;border:1px solid #c9ccd0;border-radius:3px"></div>
<div class="t" style="left:74px;top:265px;font-size:11.3px;font-style:italic;color:#8a8a8a">Filter by name</div>
<svg style="left:190px;top:264px" width="14" height="14" viewBox="0 0 14 14"><path d="M0 1.5h2M4 1.5h10M0 5h2M4 5h10M0 8.5h2M4 8.5h10M0 12h2M4 12h10" stroke="#111" stroke-width="1.6"/></svg>
<div class="t" style="left:38px;top:293px;font-size:11.3px;font-weight:bold;color:#111">Instances (13)</div>
<div class="a" style="left:199.5px;top:311px;width:13px;height:573px;background:#f6f6f6;border-left:1px solid #e6e6e6;border-right:1px solid #e6e6e6"></div>
<div class="a" style="left:203px;top:313.5px;width:7px;height:513px;background:#b4b4b4;border-radius:3.5px"></div>
<svg style="left:38.5px;top:315.5px" width="15" height="15" viewBox="0 0 15 15"><path d="M1.5 5v7.5l2 2h10.5V5c0-2-1.6-3.5-3.5-3.5H6" fill="#fff" stroke="#222" stroke-width="1"/><rect x="3.5" y="4" width="7" height="7.5" fill="#8a8a8a" stroke="#333" stroke-width=".8"/><path d="M1.5 5l2 0M3.5 11.5v3" stroke="#222" stroke-width=".9"/><rect x="0" y="0" width="7.5" height="6.5" fill="#3f72d9"/><path d="M2.50 0v6.5M5.00 0v6.5M0 2.17h7.5M0 4.33h7.5" stroke="#a9c3f2" stroke-width=".6"/></svg>
<div class="t" style="left:58px;top:316.3px;font-size:11.6px;color:#1a1a1a;">Tap &amp; Pipe Asse...</div>
<svg style="left:157px;top:315px" width="14" height="16" viewBox="0 0 14 16"><path d="M7 0v8M4 5l3 3.5L10 5" fill="none" stroke="#111" stroke-width="1.5"/><path d="M0 10h14" stroke="#111" stroke-width="1.4"/><path d="M1 15l3-4M5 15l3-4M9 15l3-4" stroke="#111" stroke-width="1.3"/></svg>
<svg style="left:60px;top:342px" width="8" height="8"><circle cx="4" cy="4" r="3" fill="none" stroke="#aaa" stroke-width="1"/><circle cx="4" cy="4" r="1" fill="#aaa"/></svg>
<div class="t" style="left:75.5px;top:339.6px;font-size:11.6px;color:#8e8e8e;">Origin</div>
<svg style="left:39.5px;top:365.40000000000003px" width="7" height="10" viewBox="0 0 7 10"><path d="M1 1l4.5 4L1 9" fill="none" stroke="#111" stroke-width="1.8"/></svg>
<svg style="left:56px;top:362.6px" width="15" height="15" viewBox="0 0 15 15"><path d="M1.5 5.5v7l2 2h10.5V5.5c0-2.2-1.8-4-4-4H4.5" fill="#fff" stroke="#222" stroke-width="1"/><path d="M1.5 5.5l2 2h6.5V2M3.5 7.5v7M10 7.5l4-2" fill="none" stroke="#222" stroke-width="1"/><rect x="0" y="0" width="7.5" height="6.5" fill="#3f72d9"/><path d="M2.50 0v6.5M5.00 0v6.5M0 2.17h7.5M0 4.33h7.5" stroke="#a9c3f2" stroke-width=".6"/></svg>
<div class="t" style="left:75.5px;top:362.9px;font-size:11.6px;color:#1a1a1a;">Main Pipe &lt;1&gt;</div>
<svg style="left:56px;top:385.90000000000003px" width="15" height="15" viewBox="0 0 15 15"><path d="M1.5 5.5v7l2 2h10.5V5.5c0-2.2-1.8-4-4-4H4.5" fill="#fff" stroke="#222" stroke-width="1"/><path d="M1.5 5.5l2 2h6.5V2M3.5 7.5v7M10 7.5l4-2" fill="none" stroke="#222" stroke-width="1"/><rect x="0" y="0" width="7.5" height="6.5" fill="#3f72d9"/><path d="M2.50 0v6.5M5.00 0v6.5M0 2.17h7.5M0 4.33h7.5" stroke="#a9c3f2" stroke-width=".6"/></svg>
<div class="t" style="left:75.5px;top:386.2px;font-size:11.6px;color:#1a1a1a;">Elbow Pipe &lt;1&gt;</div>
<svg style="left:56px;top:409.2px" width="15" height="15" viewBox="0 0 15 15"><path d="M1.5 5.5v7l2 2h10.5V5.5c0-2.2-1.8-4-4-4H4.5" fill="#fff" stroke="#222" stroke-width="1"/><path d="M1.5 5.5l2 2h6.5V2M3.5 7.5v7M10 7.5l4-2" fill="none" stroke="#222" stroke-width="1"/><rect x="0" y="0" width="7.5" height="6.5" fill="#3f72d9"/><path d="M2.50 0v6.5M5.00 0v6.5M0 2.17h7.5M0 4.33h7.5" stroke="#a9c3f2" stroke-width=".6"/></svg>
<div class="t" style="left:75.5px;top:409.5px;font-size:11.6px;color:#1a1a1a;">Elbow Pipe &lt;2&gt;</div>
<svg style="left:56px;top:432.5px" width="15" height="15" viewBox="0 0 15 15"><path d="M1.5 5.5v7l2 2h10.5V5.5c0-2.2-1.8-4-4-4H4.5" fill="#fff" stroke="#222" stroke-width="1"/><path d="M1.5 5.5l2 2h6.5V2M3.5 7.5v7M10 7.5l4-2" fill="none" stroke="#222" stroke-width="1"/><rect x="0" y="0" width="7.5" height="6.5" fill="#3f72d9"/><path d="M2.50 0v6.5M5.00 0v6.5M0 2.17h7.5M0 4.33h7.5" stroke="#a9c3f2" stroke-width=".6"/></svg>
<div class="t" style="left:75.5px;top:432.8px;font-size:11.6px;color:#1a1a1a;">Support Pipe &lt;1&gt;</div>
<svg style="left:56px;top:455.8px" width="15" height="15" viewBox="0 0 15 15"><path d="M1.5 5.5v7l2 2h10.5V5.5c0-2.2-1.8-4-4-4H4.5" fill="#fff" stroke="#222" stroke-width="1"/><path d="M1.5 5.5l2 2h6.5V2M3.5 7.5v7M10 7.5l4-2" fill="none" stroke="#222" stroke-width="1"/><rect x="0" y="0" width="7.5" height="6.5" fill="#3f72d9"/><path d="M2.50 0v6.5M5.00 0v6.5M0 2.17h7.5M0 4.33h7.5" stroke="#a9c3f2" stroke-width=".6"/></svg>
<div class="t" style="left:75.5px;top:456.1px;font-size:11.6px;color:#1a1a1a;">Support Pipe &lt;2&gt;</div>
<svg style="left:56px;top:479.09999999999997px" width="15" height="15" viewBox="0 0 15 15"><path d="M1.5 5.5v7l2 2h10.5V5.5c0-2.2-1.8-4-4-4H4.5" fill="#fff" stroke="#222" stroke-width="1"/><path d="M1.5 5.5l2 2h6.5V2M3.5 7.5v7M10 7.5l4-2" fill="none" stroke="#222" stroke-width="1"/><rect x="0" y="0" width="7.5" height="6.5" fill="#3f72d9"/><path d="M2.50 0v6.5M5.00 0v6.5M0 2.17h7.5M0 4.33h7.5" stroke="#a9c3f2" stroke-width=".6"/></svg>
<div class="t" style="left:75.5px;top:479.4px;font-size:11.6px;color:#1a1a1a;">Spacer &lt;1&gt;</div>
<svg style="left:56px;top:502.40000000000003px" width="15" height="15" viewBox="0 0 15 15"><path d="M1.5 5.5v7l2 2h10.5V5.5c0-2.2-1.8-4-4-4H4.5" fill="#fff" stroke="#222" stroke-width="1"/><path d="M1.5 5.5l2 2h6.5V2M3.5 7.5v7M10 7.5l4-2" fill="none" stroke="#222" stroke-width="1"/><rect x="0" y="0" width="7.5" height="6.5" fill="#3f72d9"/><path d="M2.50 0v6.5M5.00 0v6.5M0 2.17h7.5M0 4.33h7.5" stroke="#a9c3f2" stroke-width=".6"/></svg>
<div class="t" style="left:75.5px;top:502.7px;font-size:11.6px;color:#1a1a1a;">Spacer &lt;2&gt;</div>
<svg style="left:56px;top:525.7px" width="15" height="15" viewBox="0 0 15 15"><path d="M1.5 5.5v7l2 2h10.5V5.5c0-2.2-1.8-4-4-4H4.5" fill="#fff" stroke="#222" stroke-width="1"/><path d="M1.5 5.5l2 2h6.5V2M3.5 7.5v7M10 7.5l4-2" fill="none" stroke="#222" stroke-width="1"/><rect x="0" y="0" width="7.5" height="6.5" fill="#3f72d9"/><path d="M2.50 0v6.5M5.00 0v6.5M0 2.17h7.5M0 4.33h7.5" stroke="#a9c3f2" stroke-width=".6"/></svg>
<div class="t" style="left:75.5px;top:526.0px;font-size:11.6px;color:#1a1a1a;">Spacer &lt;3&gt;</div>
<svg style="left:56px;top:549.0px" width="15" height="15" viewBox="0 0 15 15"><path d="M1.5 5.5v7l2 2h10.5V5.5c0-2.2-1.8-4-4-4H4.5" fill="#fff" stroke="#222" stroke-width="1"/><path d="M1.5 5.5l2 2h6.5V2M3.5 7.5v7M10 7.5l4-2" fill="none" stroke="#222" stroke-width="1"/><rect x="0" y="0" width="7.5" height="6.5" fill="#3f72d9"/><path d="M2.50 0v6.5M5.00 0v6.5M0 2.17h7.5M0 4.33h7.5" stroke="#a9c3f2" stroke-width=".6"/></svg>
<div class="t" style="left:75.5px;top:549.3px;font-size:11.6px;color:#1a1a1a;">Spacer &lt;4&gt;</div>
<svg style="left:157px;top:362px" width="13" height="14" viewBox="0 0 13 14"><path d="M0 1.5h13M0 4.5h13" stroke="#111" stroke-width="1.6"/><path d="M1 13l3-5M4.5 13l3-5M8 13l3-5" stroke="#111" stroke-width="1.3"/><path d="M0 8h13" stroke="#111" stroke-width="1"/></svg>
<svg style="left:39.5px;top:575.1px" width="7" height="10" viewBox="0 0 7 10"><path d="M1 1l4.5 4L1 9" fill="none" stroke="#111" stroke-width="1.8"/></svg>
<svg style="left:56px;top:572.6px" width="15" height="15" viewBox="0 0 15 15"><path d="M1.5 4v8.5l2 2h10.5V5c0-2-1.6-3.5-3.5-3.5H4" fill="#fff" stroke="#222" stroke-width="1"/><rect x="3.5" y="4" width="7" height="7.5" fill="#777" stroke="#222" stroke-width=".8"/><path d="M1.5 4l2 0M10.5 4l3.5 1M3.5 11.5v3" stroke="#222" stroke-width=".9"/></svg>
<div class="t" style="left:75.5px;top:572.6px;font-size:11.6px;color:#1a1a1a;">BeerTapAssembly ...</div>
<svg style="left:39.5px;top:598.4000000000001px" width="7" height="10" viewBox="0 0 7 10"><path d="M1 1l4.5 4L1 9" fill="none" stroke="#111" stroke-width="1.8"/></svg>
<svg style="left:56px;top:595.9000000000001px" width="15" height="15" viewBox="0 0 15 15"><rect x="1" y="1" width="13" height="13" rx="1" fill="#e4e4e4" stroke="#d8d8d8"/><path d="M7.5 1v13M1 7.5h13" stroke="#fff" stroke-width="1"/><rect x="2" y="2" width="4.5" height="4.5" fill="#fafafa"/></svg>
<div class="t" style="left:75.5px;top:595.9px;font-size:11.6px;color:#9a9a9a;font-style:italic;text-decoration:line-through">Linear pattern 1</div>
<svg style="left:39.5px;top:621.7px" width="7" height="10" viewBox="0 0 7 10"><path d="M1 1l4.5 4L1 9" fill="none" stroke="#111" stroke-width="1.8"/></svg>
<svg style="left:56px;top:619.2px" width="15" height="15" viewBox="0 0 15 15"><rect x="1" y="1" width="13" height="13" rx="1" fill="#e4e4e4" stroke="#d8d8d8"/><path d="M7.5 1v13M1 7.5h13" stroke="#fff" stroke-width="1"/><rect x="2" y="2" width="4.5" height="4.5" fill="#fafafa"/></svg>
<div class="t" style="left:75.5px;top:619.2px;font-size:11.6px;color:#9a9a9a;font-style:italic;text-decoration:line-through">Linear pattern 2</div>
<svg style="left:39.5px;top:645.0px" width="7" height="10" viewBox="0 0 7 10"><path d="M1 1l4.5 4L1 9" fill="none" stroke="#111" stroke-width="1.8"/></svg>
<svg style="left:56px;top:642.5px" width="15" height="15" viewBox="0 0 15 15"><path d="M1.5 4v8.5l2 2h10.5V5c0-2-1.6-3.5-3.5-3.5H4" fill="#fff" stroke="#222" stroke-width="1"/><rect x="3.5" y="4" width="7" height="7.5" fill="#777" stroke="#222" stroke-width=".8"/><path d="M1.5 4l2 0M10.5 4l3.5 1M3.5 11.5v3" stroke="#222" stroke-width=".9"/></svg>
<div class="t" style="left:75.5px;top:642.5px;font-size:11.6px;color:#1a1a1a;">Fastener Stack &lt;1&gt;</div>
<svg style="left:37.5px;top:670.3px" width="11" height="7" viewBox="0 0 11 7"><path d="M1 1l4.5 4.5L10 1" fill="none" stroke="#111" stroke-width="1.8"/></svg>
<div class="t" style="left:54.5px;top:665.8px;font-size:11.6px;color:#1a1a1a;">Items (0)</div>
<svg style="left:37.5px;top:693.6px" width="11" height="7" viewBox="0 0 11 7"><path d="M1 1l4.5 4.5L10 1" fill="none" stroke="#111" stroke-width="1.8"/></svg>
<div class="t" style="left:54.5px;top:689.1px;font-size:11.6px;color:#1a1a1a;">Mate Features (10)</div>
<div class="a" style="left:44px;top:705px;width:1px;height:179px;background:#c8c8c8"></div>
<svg style="left:57px;top:714.9000000000001px" width="7" height="10" viewBox="0 0 7 10"><path d="M1 1l4.5 4L1 9" fill="none" stroke="#111" stroke-width="1.8"/></svg>
<svg style="left:76px;top:712.9000000000001px" width="12" height="14" viewBox="0 0 12 14"><ellipse cx="6" cy="3" rx="5" ry="2.3" fill="#fff" stroke="#bbb" stroke-width="1"/><path d="M1 3v8c0 1.3 2.2 2.3 5 2.3s5-1 5-2.3V3" fill="none" stroke="#bbb" stroke-width="1"/><path d="M1 7c0 1.3 2.2 2.3 5 2.3s5-1 5-2.3" fill="none" stroke="#bbb" stroke-width="1"/></svg>
<div class="t" style="left:93px;top:712.4px;font-size:11.6px;color:#8e8e8e;">Fastened 1</div>
<svg style="left:57px;top:738.2px" width="7" height="10" viewBox="0 0 7 10"><path d="M1 1l4.5 4L1 9" fill="none" stroke="#111" stroke-width="1.8"/></svg>
<svg style="left:76px;top:736.2px" width="12" height="14" viewBox="0 0 12 14"><ellipse cx="6" cy="3" rx="5" ry="2.3" fill="#fff" stroke="#bbb" stroke-width="1"/><path d="M1 3v8c0 1.3 2.2 2.3 5 2.3s5-1 5-2.3V3" fill="none" stroke="#bbb" stroke-width="1"/><path d="M1 7c0 1.3 2.2 2.3 5 2.3s5-1 5-2.3" fill="none" stroke="#bbb" stroke-width="1"/></svg>
<div class="t" style="left:93px;top:735.7px;font-size:11.6px;color:#8e8e8e;">Fastened 2</div>
<svg style="left:57px;top:761.5px" width="7" height="10" viewBox="0 0 7 10"><path d="M1 1l4.5 4L1 9" fill="none" stroke="#111" stroke-width="1.8"/></svg>
<svg style="left:76px;top:759.5px" width="12" height="14" viewBox="0 0 12 14"><ellipse cx="6" cy="3" rx="5" ry="2.3" fill="#fff" stroke="#bbb" stroke-width="1"/><path d="M1 3v8c0 1.3 2.2 2.3 5 2.3s5-1 5-2.3V3" fill="none" stroke="#bbb" stroke-width="1"/><path d="M1 7c0 1.3 2.2 2.3 5 2.3s5-1 5-2.3" fill="none" stroke="#bbb" stroke-width="1"/></svg>
<div class="t" style="left:93px;top:759.0px;font-size:11.6px;color:#8e8e8e;">Fastened 3</div>
<svg style="left:57px;top:784.8px" width="7" height="10" viewBox="0 0 7 10"><path d="M1 1l4.5 4L1 9" fill="none" stroke="#111" stroke-width="1.8"/></svg>
<svg style="left:76px;top:782.8px" width="12" height="14" viewBox="0 0 12 14"><ellipse cx="6" cy="3" rx="5" ry="2.3" fill="#fff" stroke="#bbb" stroke-width="1"/><path d="M1 3v8c0 1.3 2.2 2.3 5 2.3s5-1 5-2.3V3" fill="none" stroke="#bbb" stroke-width="1"/><path d="M1 7c0 1.3 2.2 2.3 5 2.3s5-1 5-2.3" fill="none" stroke="#bbb" stroke-width="1"/></svg>
<div class="t" style="left:93px;top:782.3px;font-size:11.6px;color:#8e8e8e;">Fastened 4</div>
<svg style="left:57px;top:808.1px" width="7" height="10" viewBox="0 0 7 10"><path d="M1 1l4.5 4L1 9" fill="none" stroke="#111" stroke-width="1.8"/></svg>
<svg style="left:76px;top:806.1px" width="12" height="14" viewBox="0 0 12 14"><ellipse cx="6" cy="3" rx="5" ry="2.3" fill="#fff" stroke="#bbb" stroke-width="1"/><path d="M1 3v8c0 1.3 2.2 2.3 5 2.3s5-1 5-2.3V3" fill="none" stroke="#bbb" stroke-width="1"/><path d="M1 7c0 1.3 2.2 2.3 5 2.3s5-1 5-2.3" fill="none" stroke="#bbb" stroke-width="1"/></svg>
<div class="t" style="left:93px;top:805.6px;font-size:11.6px;color:#8e8e8e;">Fastened 5</div>
<svg style="left:57px;top:831.4000000000001px" width="7" height="10" viewBox="0 0 7 10"><path d="M1 1l4.5 4L1 9" fill="none" stroke="#111" stroke-width="1.8"/></svg>
<svg style="left:76px;top:829.4000000000001px" width="12" height="14" viewBox="0 0 12 14"><ellipse cx="6" cy="3" rx="5" ry="2.3" fill="#fff" stroke="#bbb" stroke-width="1"/><path d="M1 3v8c0 1.3 2.2 2.3 5 2.3s5-1 5-2.3V3" fill="none" stroke="#bbb" stroke-width="1"/><path d="M1 7c0 1.3 2.2 2.3 5 2.3s5-1 5-2.3" fill="none" stroke="#bbb" stroke-width="1"/></svg>
<div class="t" style="left:93px;top:828.9px;font-size:11.6px;color:#8e8e8e;">Fastened 6</div>
<svg style="left:57px;top:854.7px" width="7" height="10" viewBox="0 0 7 10"><path d="M1 1l4.5 4L1 9" fill="none" stroke="#111" stroke-width="1.8"/></svg>
<svg style="left:76px;top:852.7px" width="12" height="14" viewBox="0 0 12 14"><ellipse cx="6" cy="3" rx="5" ry="2.3" fill="#fff" stroke="#bbb" stroke-width="1"/><path d="M1 3v8c0 1.3 2.2 2.3 5 2.3s5-1 5-2.3V3" fill="none" stroke="#bbb" stroke-width="1"/><path d="M1 7c0 1.3 2.2 2.3 5 2.3s5-1 5-2.3" fill="none" stroke="#bbb" stroke-width="1"/></svg>
<div class="t" style="left:93px;top:852.2px;font-size:11.6px;color:#8e8e8e;">Fastened 7</div>
<svg style="left:57px;top:878.0px" width="7" height="10" viewBox="0 0 7 10"><path d="M1 1l4.5 4L1 9" fill="none" stroke="#111" stroke-width="1.8"/></svg>
<svg style="left:76px;top:876.0px" width="12" height="14" viewBox="0 0 12 14"><ellipse cx="6" cy="3" rx="5" ry="2.3" fill="#fff" stroke="#bbb" stroke-width="1"/><path d="M1 3v8c0 1.3 2.2 2.3 5 2.3s5-1 5-2.3V3" fill="none" stroke="#bbb" stroke-width="1"/><path d="M1 7c0 1.3 2.2 2.3 5 2.3s5-1 5-2.3" fill="none" stroke="#bbb" stroke-width="1"/></svg>
<div class="t" style="left:93px;top:875.5px;font-size:11.6px;color:#8e8e8e;">Fastened 8</div>
<div class="a" style="left:33px;top:884px;width:1567px;height:27px;background:#cfd0d1"></div>
<div class="a" style="left:34px;top:884px;width:34px;height:27px;background:#d2d2d2"></div>
<svg style="left:42px;top:889px" width="14" height="14"><path d="M7 0v14M0 7h14" stroke="#222" stroke-width="2"/></svg>
<div class="a" style="left:68px;top:884px;width:1445px;height:24px;background:#e7e7e7"></div>
<div class="a" style="left:68px;top:907.5px;width:1445px;height:1.5px;background:#bdbdbd"></div>
<svg style="left:78px;top:888px" width="16" height="16" viewBox="0 0 16 16"><path d="M1 5h5v10H1z M6 2h4v13H6z" fill="#fff" stroke="#222" stroke-width="1.1"/><path d="M10 1.5h3c1 0 1.5.5 1.5 1.5v12H10z" fill="#fff" stroke="#222" stroke-width="1.1"/></svg>
<div class="t" style="left:98px;top:890px;font-size:12px;color:#222">Pipe System</div>
<div class="a" style="left:248.5px;top:884px;width:1.2px;height:24px;background:#b4b4b4"></div>
<svg style="left:260px;top:889px" width="17" height="14" viewBox="0 0 17 14"><path d="M1 2c0-.6.4-1 1-1h4.5l2 2H15c.6 0 1 .4 1 1v8.5c0 .6-.4 1-1 1H2c-.6 0-1-.4-1-1z" fill="#fff" stroke="#222" stroke-width="1.2" stroke-linejoin="round"/></svg>
<div class="t" style="left:280px;top:890px;font-size:12px;color:#222">Profiles</div>
<div class="a" style="left:429.5px;top:884px;width:1.2px;height:24px;background:#b4b4b4"></div>
<svg style="left:441px;top:888px" width="16" height="16" viewBox="0 0 16 16"><path d="M1 2h10l3.5 3v10H2.5c-.8 0-1.5-.7-1.5-1.5z" fill="#fff" stroke="#222" stroke-width="1.1"/><rect x="2.5" y="3.5" width="8.5" height="8.5" fill="#6a6a6a" stroke="#222" stroke-width=".8"/></svg>
<div class="t" style="left:461px;top:890px;font-size:12px;color:#222">Tap &amp; Pipe Assembly</div>
<div class="a" style="left:610.5px;top:884px;width:1.2px;height:24px;background:#b4b4b4"></div>
<div class="a" style="left:611px;top:884px;width:179px;height:24px;background:#ffffff"></div>
<div class="a" style="left:613px;top:906.5px;width:176px;height:2px;background:#1b3faa"></div>
<svg style="left:622px;top:888px" width="16" height="16" viewBox="0 0 16 16"><path d="M1 2h10l3.5 3v10H2.5c-.8 0-1.5-.7-1.5-1.5z" fill="#fff" stroke="#222" stroke-width="1.1"/><rect x="2.5" y="3.5" width="8.5" height="8.5" fill="#6a6a6a" stroke="#222" stroke-width=".8"/></svg>
<div class="t" style="left:642px;top:890px;font-size:12px;color:#222">Tap &amp; Pipe Assembly C...</div>
<div class="a" style="left:790.5px;top:884px;width:1.2px;height:24px;background:#b4b4b4"></div>
<svg style="left:802px;top:888px" width="16" height="16" viewBox="0 0 16 16"><path d="M1 2h10l3.5 3v10H2.5c-.8 0-1.5-.7-1.5-1.5z" fill="#fff" stroke="#222" stroke-width="1.1"/><rect x="2.5" y="3.5" width="8.5" height="8.5" fill="#6a6a6a" stroke="#222" stroke-width=".8"/></svg>
<div class="t" style="left:822px;top:890px;font-size:12px;color:#222">Fastener Stack</div>
<div class="a" style="left:971.5px;top:884px;width:1.2px;height:24px;background:#b4b4b4"></div>
<svg style="left:983px;top:889px" width="17" height="14" viewBox="0 0 17 14"><path d="M1 2c0-.6.4-1 1-1h4.5l2 2H15c.6 0 1 .4 1 1v8.5c0 .6-.4 1-1 1H2c-.6 0-1-.4-1-1z" fill="#fff" stroke="#222" stroke-width="1.2" stroke-linejoin="round"/></svg>
<div class="t" style="left:1003px;top:890px;font-size:12px;color:#222">Faucet Designs</div>
<div class="a" style="left:1151.5px;top:884px;width:1.2px;height:24px;background:#b4b4b4"></div>
<svg style="left:1163px;top:889px" width="17" height="14" viewBox="0 0 17 14"><path d="M1 2c0-.6.4-1 1-1h4.5l2 2H15c.6 0 1 .4 1 1v8.5c0 .6-.4 1-1 1H2c-.6 0-1-.4-1-1z" fill="#fff" stroke="#222" stroke-width="1.2" stroke-linejoin="round"/></svg>
<div class="t" style="left:1183px;top:890px;font-size:12px;color:#222">Archive</div>
<div class="a" style="left:1331.5px;top:884px;width:1.2px;height:24px;background:#b4b4b4"></div>
<svg style="left:1343px;top:889px" width="17" height="14" viewBox="0 0 17 14"><path d="M1 2c0-.6.4-1 1-1h4.5l2 2H15c.6 0 1 .4 1 1v8.5c0 .6-.4 1-1 1H2c-.6 0-1-.4-1-1z" fill="#fff" stroke="#222" stroke-width="1.2" stroke-linejoin="round"/></svg>
<div class="t" style="left:1363px;top:890px;font-size:12px;color:#222">Renderings</div>
<div class="a" style="left:217px;top:454px;width:30px;height:30px;background:#fdfdfb;border:1px solid #d2d5d8;border-left:none"></div>
<svg style="left:0;top:0" width="1" height="1"><path d="M224 461.5l2.4 2.4 2.4-2.4M226.4 466v11" stroke="#111" stroke-width="1.2" fill="none"/><path d="M231 462.5h9" stroke="#444" stroke-width="1"/><path d="M228 467h12M228 476h12" stroke="#777" stroke-width="1.4"/><path d="M228 471.5h12" stroke="#222" stroke-width="1.4"/></svg>
<div class="a" style="left:1572px;top:360px;width:30px;height:89px;background:#fcfcfb;border:1px solid #d2d6da"></div>
<div class="a" style="left:1573px;top:390px;width:27px;height:1px;background:#d8dbde"></div>
<div class="a" style="left:1573px;top:419.5px;width:27px;height:1px;background:#d8dbde"></div>
<svg style="left:1579px;top:367px" width="17" height="17" viewBox="0 0 17 17"><rect x="1" y="1" width="15.5" height="15.5" rx="3" fill="#fff" stroke="#222" stroke-width="1.4"/><path d="M4 5h9M5.5 8h7.5M5.5 11h7.5M4.5 13.5h8.5" stroke="#222" stroke-width="1.2"/></svg>
<svg style="left:1578px;top:395px" width="19" height="18" viewBox="0 0 19 18"><path d="M6 8l5-2.5 6 2.5v6.5l-5 3-6-3z" fill="#fff" stroke="#222" stroke-width="1.2"/><path d="M6 8l6 3 5-3M12 11v6.5" fill="none" stroke="#222" stroke-width="1.2"/><rect x="1" y="1" width="8" height="7" fill="#3b6fd8"/><path d="M3.5 1v7M6 1v7M1 3.5h8M1 6h8" stroke="#b8ccf4" stroke-width=".6"/></svg>
<svg style="left:1578px;top:425px" width="19" height="19" viewBox="0 0 19 19"><rect x="1" y="1" width="5" height="5" rx="1.5" fill="#ddd" stroke="#333" stroke-width="1"/><path d="M5 8l4 1.5" stroke="#2b55c8" stroke-width="1.2" stroke-dasharray="1.2 .8"/><path d="M9 9c0-1 .8-1.5 1.5-1.5h2c1 0 1.5.5 1.5 1.5v2h3.5v4.5c0 1-.7 2-1.5 2H10c-.6 0-1-.4-1-1z" fill="#fff" stroke="#333" stroke-width="1.1"/></svg>
<div class="a" style="left:1572px;top:459px;width:30px;height:118px;background:#fcfcfb;border:1px solid #d2d6da"></div>
<div class="a" style="left:1573px;top:488.5px;width:27px;height:1px;background:#d8dbde"></div>
<div class="a" style="left:1573px;top:518.5px;width:27px;height:1px;background:#d8dbde"></div>
<div class="a" style="left:1573px;top:547px;width:27px;height:1px;background:#d8dbde"></div>
<div class="a" style="left:1577px;top:463px;width:21px;height:21px;background:#eeeff1;border:1px solid #cfd3d8;border-radius:3px"></div>
<div class="a" style="left:1577px;top:493px;width:21px;height:21px;background:#eeeff1;border:1px solid #cfd3d8;border-radius:3px"></div>
<div class="a" style="left:1577px;top:523px;width:21px;height:21px;background:#eeeff1;border:1px solid #cfd3d8;border-radius:3px"></div>
<div class="a" style="left:1577px;top:552px;width:21px;height:21px;background:#eeeff1;border:1px solid #cfd3d8;border-radius:3px"></div>
<svg style="left:1580px;top:466px" width="15" height="15" viewBox="0 0 15 15"><path d="M1 2h13M5 5h9M1 7.5h9M5 10h9M1 13h13" stroke="#2f6bd0" stroke-width="1.5"/></svg>
<svg style="left:1580px;top:495px" width="16" height="16" viewBox="0 0 16 16"><path d="M1 4l3-3h11v11l-3 3H1z" fill="#2a5bc4" stroke="#183c90" stroke-width="1"/><path d="M4 1v11h11M1 15l3-3" fill="#6f95dc" stroke="#9db6e8" stroke-width=".8"/><rect x="4.5" y="1.5" width="10" height="10" fill="#3f6fd0"/><path d="M1 4h11v11" fill="none" stroke="#183c90" stroke-width=".9"/></svg>
<svg style="left:1580px;top:525px" width="16" height="16" viewBox="0 0 16 16"><rect x="1" y="3" width="14" height="12" rx="1" fill="#cfe0fa" stroke="#1d49b5" stroke-width="1.4"/><path d="M1 6h14" stroke="#1d49b5" stroke-width="1.4"/><path d="M4.5 1v4M11.5 1v4" stroke="#1d49b5" stroke-width="1.6"/><path d="M5 10l2 2 4-4" fill="none" stroke="#1d49b5" stroke-width="1.4"/></svg>
<svg style="left:1580px;top:554px" width="16" height="16" viewBox="0 0 16 16"><circle cx="8" cy="8" r="5.5" fill="none" stroke="#fff" stroke-width="5"/><path d="M3.5 3.8A6.3 6.3 0 0 1 12.5 3.8" stroke="#5cb85c" stroke-width="3" fill="none"/><path d="M12.5 4.2A6.3 6.3 0 0 1 12.5 11.8" stroke="#5aa9e6" stroke-width="3" fill="none"/><path d="M12.2 12.2A6.3 6.3 0 0 1 3.8 12.2" stroke="#f0a030" stroke-width="3" fill="none"/><path d="M3.5 11.8A6.3 6.3 0 0 1 3.5 4.2" stroke="#d9342b" stroke-width="3" fill="none"/></svg>
<svg style="left:0;top:0" width="1" height="1"><path d="M1549.5 867.5v6c0 1.5 2 2.5 4.5 2.5s4.5-1 4.5-2.5v-6" fill="#fff" stroke="#111" stroke-width="1.2"/><ellipse cx="1554" cy="867.5" rx="4.5" ry="2.6" fill="#fff" stroke="#111" stroke-width="1.2"/><ellipse cx="1554" cy="867.5" rx="2" ry="1" fill="#111"/><path d="M1544.5 872.5h10v3.5h-10z" fill="#fff" stroke="#111" stroke-width="1.2"/><path d="M1546.5 873v1.5M1548.5 873v1.5M1550.5 873v1.5M1552.5 873v1.5" stroke="#111" stroke-width=".8"/></svg>
<svg style="left:0;top:0" width="1" height="1"><path d="M1577 865h12M1583 865v11" stroke="#111" stroke-width="1.2"/><path d="M1579.5 866l-2.5 6h5zM1586.5 866l-2.5 6h5z" fill="#ddd" stroke="#111" stroke-width="1"/><path d="M1576.5 876.5h13" stroke="#111" stroke-width="1.8"/></svg>
<svg style="left:1440px;top:75px" width="160" height="150" viewBox="1440 75 160 150">
<g fill="#d8dde3">
<path d="M1520.5 83l-5 7h10z"/>
<path d="M1520.5 216l-5-7h10z"/>
<path d="M1453 149.5l8-6.5v13z"/>
<path d="M1588 149.5l-8-6.5v13z"/>
</g>
<g fill="none" stroke="#d8dde3" stroke-width="4">
<path d="M1502 92c-10 3-19 9-25 16"/>
<path d="M1539 92c10 3 19 9 25 16"/>
</g>
<path d="M1472 112l1-9 7 5z M1569 112l-1-9-7 5z" fill="#d8dde3"/>
<path d="M1488 125c10-4 25-6 33-5 10 0 24 2 33 6 3 2 4 6 4 10v32c0 4-2 7-6 9-10 3-23 4-31 4-9 0-22-1-31-4-3-1-5-4-5-8v-34c0-4 1-8 3-10z" fill="#e3e7eb"/>
<path d="M1494 135c8-3 18-3 22 2 2 3 2 10 2 20v14c0 3-2 5-5 5-7 0-13-1-18-3-3-1-4-3-4-6v-26c0-3 1-5 3-6z" fill="#fff"/>
<path d="M1526 137c4-5 16-5 25-2 2 1 3 3 3 6v26c0 3-1 5-4 6-5 2-11 3-18 3-3 0-5-2-5-5v-14c0-10 0-17 -1-20z" fill="#fff"/>
<path d="M1494 127l10-7h30l14 6-9 4h-36z" fill="#fff"/><path d="M1515 124.5l12 1" stroke="#777" stroke-width=".8"/>
<ellipse cx="1521" cy="133" rx="6" ry="5" fill="#fff"/>
<ellipse cx="1521" cy="180" rx="6" ry="4" fill="#fff"/>
<text x="1493.5" y="157" font-family="Liberation Sans" font-size="9.5" fill="#111" stroke="#111" stroke-width=".25" transform="rotate(5 1503 154)">Front</text>
<text x="1532" y="157" font-family="Liberation Sans" font-size="9" fill="#111" stroke="#111" stroke-width=".25" transform="rotate(-10 1540 154)">Right</text>
<path d="M1482.5 126v50.5" stroke="#1a3fbf" stroke-width="1.2"/>
<path d="M1482.5 176.5l40.5 6" stroke="#c0282a" stroke-width="1.2"/>
<path d="M1482.5 176.5l35 -9" stroke="#6aa860" stroke-width="1"/>
<text x="1479" y="122" font-family="Liberation Sans" font-size="9" font-weight="bold" fill="#1a3fbf">Z</text>
<text x="1524" y="188" font-family="Liberation Sans" font-size="10" fill="#c0282a">X</text>
<text x="1517" y="171" font-family="Liberation Sans" font-size="8" fill="#3a9a9a">Y</text>
<path d="M1554 203l6-3 6 3v8l-6 3-6-3z" fill="#d0d0d0" stroke="#333" stroke-width="1"/>
<path d="M1554 203l6 3 6-3M1560 206v8" fill="none" stroke="#333" stroke-width="1"/>
<path d="M1576 206h7l-3.5 4z" fill="#222"/>
</svg>
</body></html>
